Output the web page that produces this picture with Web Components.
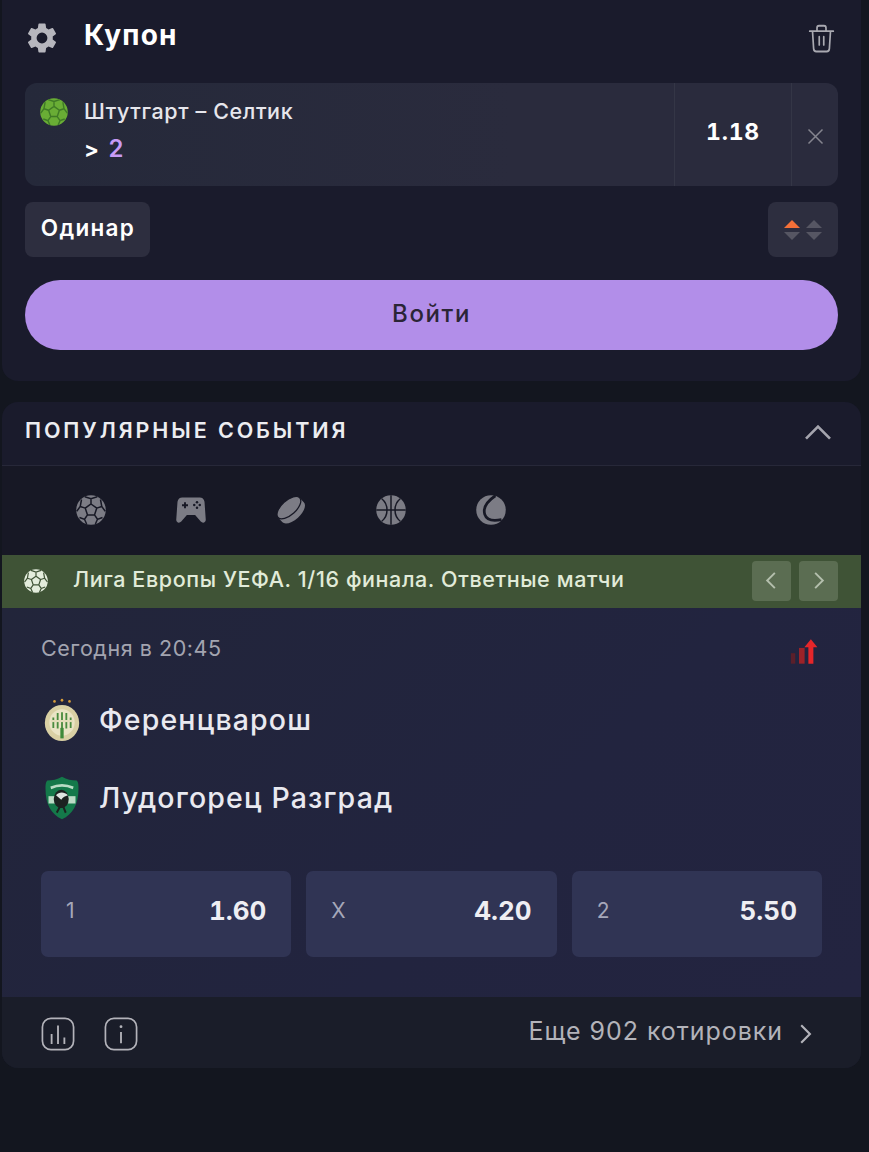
<!DOCTYPE html>
<html lang="ru">
<head>
<meta charset="utf-8">
<title>Купон</title>
<style>
    html, body { margin: 0; height: 100%; }
    body {
        background: #13161f;
        color: #fff;
        font-family: Inter, Roboto, "Noto Sans", sans-serif;
    }
    main {
        display: flex;
        flex-direction: column;
        gap: 21px;
        width: 859px;
        margin-left: 2px;
    }
</style>
</head>
<body>
<main>
    <coupon-panel></coupon-panel>
    <popular-panel></popular-panel>
</main>

<script>
const BALL_SEAMS = `
    <path d="M12 7.200l4.600 3.300-1.800 5.400H9.200l-1.800-5.400zM12 7.200V3M16.600 10.500l4-1.300M14.800 15.900l2.400 3.500M9.200 15.900l-2.400 3.500M7.400 10.500l-4-1.300M7 1.400l5 1.600 5-1.600M19.600 3.600l1 5.600 2.800 3.800M21.200 18l-4 1.400-1.700 3.800M8.500 23.200l-1.700-3.800-4-1.400M.6 13l2.800-3.800 1-5.600" stroke="var(--seam)" stroke-width="1.200" fill="none"/>`;

const ICONS = {
    gear: `<path fill="currentColor" d="M19.14 12.94c.04-.3.06-.61.06-.94 0-.32-.02-.64-.07-.94l2.03-1.58a.49.49 0 0 0 .12-.61l-1.92-3.32a.488.488 0 0 0-.59-.22l-2.39.96c-.5-.38-1.03-.7-1.62-.94l-.36-2.54a.484.484 0 0 0-.48-.41h-3.84c-.24 0-.43.17-.47.41l-.36 2.54c-.59.24-1.13.57-1.62.94l-2.39-.96c-.22-.08-.47 0-.59.22L2.74 8.87c-.12.21-.08.47.12.61l2.03 1.58c-.05.3-.09.63-.09.94s.02.64.07.94l-2.03 1.58a.49.49 0 0 0-.12.61l1.92 3.32c.12.22.37.29.59.22l2.39-.96c.5.38 1.03.7 1.62.94l.36 2.54c.05.24.24.41.48.41h3.84c.24 0 .44-.17.47-.41l.36-2.54c.59-.24 1.13-.56 1.62-.94l2.39.96c.22.08.47 0 .59-.22l1.92-3.32c.12-.22.07-.47-.12-.61l-2.01-1.58zM12 15.6A3.6 3.6 0 1 1 12 8.4a3.6 3.6 0 0 1 0 7.2z"/>`,
    trash: `<g fill="none" stroke="currentColor" stroke-width="1.500" stroke-linecap="round" stroke-linejoin="round"><path d="M1.500 6.500h21M8 6V4c0-1 .8-1.800 1.800-1.800h4.400c1 0 1.800.8 1.800 1.800v2M4 6.500l1 14c.1 1.300 1.100 2.300 2.400 2.300h9.200c1.300 0 2.300-1 2.400-2.300l1-14M10 11v6.500M14 11v6.500"/></g>`,
    close: `<path d="M4 4l16 16M20 4L4 20" stroke="currentColor" stroke-width="1.700" fill="none"/>`,
    up: `<path d="M3 17l9-9 9 9" stroke="currentColor" stroke-width="2" fill="none"/>`,
    left: `<path d="M15.500 4l-8 8 8 8" stroke="currentColor" stroke-width="2" fill="none"/>`,
    right: `<path d="M8.500 4l8 8-8 8" stroke="currentColor" stroke-width="2" fill="none"/>`,
    ball: `<circle cx="12" cy="12" r="11.800" fill="currentColor"/>${BALL_SEAMS}`,
    gamepad: `<path fill="currentColor" d="M5 2h14c2 0 3.400 1.200 3.800 3.400l1 14.200c.2 2.400-2.400 3.400-4 1.600l-4.500-5.200H8.700l-4.500 5.200c-1.600 1.800-4.200.8-4-1.600l1-14.200C1.600 3.200 3 2 5 2z"/><path d="M7.200 5.800v4.800M4.800 8.200h4.800" stroke="var(--seam)" stroke-width="1.500"/><g fill="var(--seam)"><circle cx="16.800" cy="5.800" r="1"/><circle cx="16.800" cy="10.200" r="1"/><circle cx="14.600" cy="8" r="1"/><circle cx="19" cy="8" r="1"/></g>`,
    puck: `<g transform="rotate(-42 12 12)"><path fill="currentColor" d="M.3 9.500v5c0 3.200 5.200 5.800 11.700 5.800s11.700-2.600 11.700-5.800v-5z"/><ellipse cx="12" cy="9.500" rx="11.700" ry="5.800" fill="currentColor" stroke="var(--seam)" stroke-width="1"/></g>`,
    basket: `<circle cx="12" cy="12" r="11.800" fill="currentColor"/><g fill="none" stroke="var(--seam)" stroke-width="1.200"><path d="M12 .2v23.600M.2 12h23.600M4.600 3c3 2.400 4.200 5.400 4.200 9s-1.200 6.600-4.200 9M19.400 3c-3 2.400-4.200 5.400-4.200 9s1.200 6.600 4.200 9"/></g>`,
    tennis: `<circle cx="12" cy="12" r="11.800" fill="currentColor"/><path d="M15.500 .6C9 5 5.500 10.500 7 15.500c1.400 4.400 6.500 5.600 13.400 4.200" fill="none" stroke="var(--seam)" stroke-width="2.200"/>`,
    trend: `<path d="M1.500 13h3.500v9H1.500z" fill="#5a1f2a"/><path d="M8 8.500h4.500V22H8z" fill="#9c2228"/><path d="M15.500 22V8h-3.200l5.200-7 5.200 7h-3.200v14z" fill="#e5262a"/>`,
    stats: `<rect x="1" y="1" width="22" height="22" rx="6" fill="none" stroke="currentColor" stroke-width="1.200"/><path d="M7.500 12v7M12 6v13M16.500 14.500V19" stroke="currentColor" stroke-width="1.300" fill="none"/>`,
    info: `<rect x="1" y="1" width="22" height="22" rx="6" fill="none" stroke="currentColor" stroke-width="1.200"/><path d="M12 10.500V18.500" stroke="currentColor" stroke-width="1.300" fill="none"/><circle cx="12" cy="6.800" r="1" fill="currentColor"/>`,
    ferencvaros: `<g fill="#d59b3a"><circle cx="7.500" cy="1.400" r=".8"/><circle cx="12" cy=".7" r=".8"/><circle cx="16.500" cy="1.400" r=".8"/></g><circle cx="12" cy="13.700" r="10.300" fill="#d9d0a4"/><circle cx="12" cy="13.400" r="7.600" fill="#eae4c5"/><g stroke="#4a8b3f" stroke-width="1.100"><path d="M6.800 10.500v6M9.400 8v8.800M12 7.500v9M14.600 8v8.800M17.200 10.500v6"/></g><path d="M5.500 12.600h13" stroke="#e3dcb8" stroke-width="1.200"/><path d="M12 16.500v6" stroke="#3f8a3a" stroke-width="2"/>`,
    ludogorets: `<path d="M12 .4c3.200 1.600 6.400 2 9.800 2.100 1.200 1 1.200 2.500 1.200 4.500 0 8.500-3.800 14-11 16.600C4.800 21 1 15.500 1 7c0-2 0-3.500 1.200-4.500C5.600 2.400 8.800 2 12 .4z" fill="#14794a"/><path d="M4.500 6.500c5-1.800 10-1.800 15 0" stroke="#b8dcc4" stroke-width="1.500" fill="none"/><path d="M3 11h18v4H3z" fill="#bcdcc6"/><circle cx="11.500" cy="12.500" r="5" fill="#1c2220"/><path d="M8 10.500c2-2 5.500-2 8 0-1.800.5-3.400.8-4.500 2.500z" fill="#dfe5e1"/><path d="M10.500 17l-2 3M13 17l1.500 3" stroke="#1c2220" stroke-width="1.300"/>`
};

class UiIcon extends HTMLElement {
    connectedCallback() {
        const size = this.getAttribute('size') || 24;
        const width = this.getAttribute('width') || size;
        this.attachShadow({ mode: 'open' }).innerHTML = `
            <style>
                :host { display: inline-flex; flex: none; }
                svg { display: block; overflow: visible; }
            </style>
            <svg width="${width}" height="${size}" viewBox="0 0 24 24"
                preserveAspectRatio="none">${ICONS[this.getAttribute('name')]}</svg>
        `;
    }
}

class CouponBet extends HTMLElement {
    constructor() {
        super();
        this.attachShadow({ mode: 'open' }).innerHTML = `
            <style>
                :host {
                    display: flex;
                    height: 103px;
                    background: linear-gradient(90deg, #25293a, #2a2b3d 60%);
                    border-radius: 12px;
                    overflow: hidden;
                }
                .info {
                    flex: 1;
                    display: grid;
                    grid-template-columns: 59px 1fr;
                    grid-template-rows: 38px 37px;
                    padding: 9px 0 0 0;
                    font-size: 21.500px;
                    font-weight: 500;
                    letter-spacing: .6px;
                    color: #e6e6ec;
                    align-items: center;
                }
                .sport { justify-self: end; margin-right: 16px; --seam: #3f7a26; color: #69ad35; margin-top: 2px; }
                .pick { display: flex; align-items: center; gap: 9px; grid-column: 2; font-size: 22px; font-weight: 700; color: #fff; }
                .pick b { color: #c79bf5; font-size: 24px; font-weight: 600; }
                .odd {
                    width: 118px;
                    display: flex;
                    align-items: center;
                    justify-content: center;
                    padding-bottom: 5px;
                    box-sizing: border-box;
                    font-size: 23px;
                    font-weight: 700;
                    letter-spacing: .8px;
                    font-variant-numeric: tabular-nums;
                    border-left: 1px solid #343646;
                    border-right: 1px solid #343646;
                }
                .remove {
                    width: 46px;
                    display: flex;
                    align-items: center;
                    justify-content: center;
                    padding-top: 4px;
                    box-sizing: border-box;
                    color: #85858f;
                }
            </style>
            <div class="info">
                <ui-icon class="sport" name="ball" size="28"></ui-icon>
                <span><slot name="title"></slot></span>
                <span class="pick"><span>&gt;</span><b><slot name="value"></slot></b></span>
            </div>
            <div class="odd"><slot name="odd"></slot></div>
            <div class="remove"><ui-icon name="close" size="21"></ui-icon></div>
        `;
    }
}

class CouponPanel extends HTMLElement {
    constructor() {
        super();
        this.attachShadow({ mode: 'open' }).innerHTML = `
            <style>
                :host {
                    display: block;
                    height: 381px;
                    box-sizing: border-box;
                    padding: 0 23px 0 23px;
                    background: #1a1b2c;
                    border-radius: 0 0 16px 16px;
                }
                header {
                    display: flex;
                    align-items: center;
                    height: 83px;
                    padding-bottom: 14px;
                    box-sizing: border-box;
                }
                .gear { color: #b6b6bd; margin-left: -1px; margin-top: 7px; }
                h1 {
                    flex: 1;
                    margin: 0 0 0 24px;
                    font-size: 28px;
                    font-weight: 700;
                    letter-spacing: 1.200px;
                    color: #fff;
                }
                .trash { color: #a9a9b1; margin-top: 7px; margin-right: 3px; }
                .options {
                    display: flex;
                    justify-content: space-between;
                    margin-top: 16px;
                    height: 55px;
                }
                .chip {
                    display: flex;
                    align-items: center;
                    justify-content: center;
                    background: #2d2e3f;
                    border-radius: 8px;
                    box-sizing: border-box;
                }
                .single { width: 125px; font-size: 22.500px; font-weight: 600; letter-spacing: 1.300px; padding: 0 0 4px 1px; }
                .sort { width: 70px; gap: 6px; }
                .arrows { display: flex; flex-direction: column; gap: 4px; }
                .tri { width: 0; height: 0; border-left: 8px solid transparent; border-right: 8px solid transparent; }
                .tri.u { border-bottom: 8px solid #565663; }
                .tri.d { border-top: 8px solid #565663; }
                .tri.on { border-bottom-color: #f47038; }
                .login {
                    display: flex;
                    align-items: center;
                    justify-content: center;
                    height: 70px;
                    margin-top: 23px;
                    padding-bottom: 4px;
                    box-sizing: border-box;
                    background: #b28ee9;
                    border-radius: 35px;
                    color: #2b2536;
                    font-size: 24px;
                    font-weight: 500;
                    letter-spacing: 1.600px;
                }
            </style>
            <header>
                <ui-icon class="gear" name="gear" size="36"></ui-icon>
                <h1>Купон</h1>
                <ui-icon class="trash" name="trash" size="30" width="27"></ui-icon>
            </header>
            <coupon-bet>
                <span slot="title">Штутгарт – Селтик</span>
                <span slot="value">2</span>
                <span slot="odd">1.18</span>
            </coupon-bet>
            <div class="options">
                <div class="chip single">Одинар</div>
                <div class="chip sort">
                    <div class="arrows"><i class="tri u on"></i><i class="tri d"></i></div>
                    <div class="arrows"><i class="tri u"></i><i class="tri d"></i></div>
                </div>
            </div>
            <div class="login">Войти</div>
        `;
    }
}

class SportTabs extends HTMLElement {
    constructor() {
        super();
        const names = ['ball', 'gamepad', 'puck', 'basket', 'tennis'];
        this.attachShadow({ mode: 'open' }).innerHTML = `
            <style>
                :host {
                    display: flex;
                    align-items: center;
                    gap: 70px;
                    height: 89px;
                    padding: 0 0 2px 74px;
                    box-sizing: border-box;
                    background: #171825;
                    --seam: #171825;
                    color: #7c7c85;
                }
            </style>
            ${names.map(name => `<ui-icon name="${name}" size="30"></ui-icon>`).join('')}
        `;
    }
}

class LeagueBar extends HTMLElement {
    constructor() {
        super();
        this.attachShadow({ mode: 'open' }).innerHTML = `
            <style>
                :host {
                    display: flex;
                    align-items: center;
                    height: 53px;
                    padding: 0 23px 2px 22px;
                    box-sizing: border-box;
                    background: #3f5336;
                    color: #e1ebd9;
                    font-size: 21.500px;
                    font-weight: 500;
                    letter-spacing: .6px;
                }
                .flag { color: #e3ecdc; --seam: #3f5336; margin-right: 25px; }
                .name { flex: 1; white-space: nowrap; margin-bottom: 3px; }
                button {
                    display: flex;
                    align-items: center;
                    justify-content: center;
                    width: 39px;
                    height: 40px;
                    padding: 0;
                    margin-left: 8px;
                    border: none;
                    border-radius: 4px;
                    background: #5b6d52;
                    color: #b4bfad;
                }
            </style>
            <ui-icon class="flag" name="ball" size="24"></ui-icon>
            <span class="name"><slot></slot></span>
            <button><ui-icon name="left" size="23"></ui-icon></button>
            <button><ui-icon name="right" size="23"></ui-icon></button>
        `;
    }
}

class TeamRow extends HTMLElement {
    constructor() {
        super();
        this.attachShadow({ mode: 'open' }).innerHTML = `
            <style>
                :host {
                    display: flex;
                    align-items: center;
                    gap: 16px;
                    height: 78px;
                    font-size: 28.500px;
                    font-weight: 500;
                    letter-spacing: 1.150px;
                    color: #e9e9f0;
                }
                .logo { display: flex; width: 42px; justify-content: center; }
                span { margin-bottom: 2px; }
            </style>
            <div class="logo"><slot name="logo"></slot></div>
            <span><slot></slot></span>
        `;
    }
}

class OddButton extends HTMLElement {
    constructor() {
        super();
        this.attachShadow({ mode: 'open' }).innerHTML = `
            <style>
                :host {
                    flex: 1;
                    display: flex;
                    align-items: center;
                    justify-content: space-between;
                    height: 86px;
                    padding: 0 25px 8px;
                    box-sizing: border-box;
                    background: #303454;
                    border-radius: 7px;
                }
                .label { font-size: 21px; color: #a5a7b9; }
                .value { font-size: 26px; font-weight: 700; color: #eeeef3; font-variant-numeric: tabular-nums; }
            </style>
            <span class="label">${this.getAttribute('label')}</span>
            <span class="value"><slot></slot></span>
        `;
    }
}

class MatchCard extends HTMLElement {
    constructor() {
        super();
        this.attachShadow({ mode: 'open' }).innerHTML = `
            <style>
                :host {
                    display: block;
                    height: 389px;
                    box-sizing: border-box;
                    padding: 0 39px;
                    background: linear-gradient(135deg, #22253a, #22243f 60%, #232440);
                }
                .top {
                    display: flex;
                    justify-content: space-between;
                    align-items: center;
                    height: 80px;
                    color: #a3a4b0;
                    font-size: 21.500px;
                    letter-spacing: .55px;
                }
                .trend { margin-right: 3px; margin-top: 7px; }
                .teams { display: block; margin-top: -7px; }
                .odds { display: flex; gap: 15px; margin-top: 34px; }
            </style>
            <div class="top">
                <span><slot name="time"></slot></span>
                <ui-icon class="trend" name="trend" size="28" width="30"></ui-icon>
            </div>
            <div class="teams"><slot name="teams"></slot></div>
            <div class="odds"><slot name="odds"></slot></div>
        `;
    }
}

class PopularPanel extends HTMLElement {
    constructor() {
        super();
        this.attachShadow({ mode: 'open' }).innerHTML = `
            <style>
                :host {
                    display: block;
                    background: #1a1b2c;
                    border-radius: 16px;
                    overflow: hidden;
                }
                header {
                    display: flex;
                    align-items: center;
                    justify-content: space-between;
                    height: 64px;
                    padding: 0 27px 7px 23px;
                    box-sizing: border-box;
                    border-bottom: 1px solid #272839;
                    font-size: 21.500px;
                    font-weight: 600;
                    letter-spacing: 2.900px;
                    color: #ecedf1;
                }
                header ui-icon { color: #a4a4ad; margin-top: 3px; }
                footer {
                    display: flex;
                    align-items: center;
                    height: 71px;
                    padding: 0 43px 0 39px;
                    box-sizing: border-box;
                    background: #1a1d29;
                    color: #b3b3ba;
                }
                footer .icons { display: flex; gap: 29px; flex: 1; margin-top: 3px; }
                .more { font-size: 25px; letter-spacing: .95px; margin-right: 9px; margin-bottom: 4px; }
                .go { margin-top: 2px; }
            </style>
            <header>
                <span>ПОПУЛЯРНЫЕ СОБЫТИЯ</span>
                <ui-icon name="up" size="32"></ui-icon>
            </header>
            <sport-tabs></sport-tabs>
            <league-bar>Лига Европы УЕФА. 1/16 финала. Ответные матчи</league-bar>
            <match-card>
                <span slot="time">Сегодня в 20:45</span>
                <div slot="teams">
                    <team-row><ui-icon slot="logo" name="ferencvaros" size="42" width="40"></ui-icon>Ференцварош</team-row>
                    <team-row><ui-icon slot="logo" name="ludogorets" size="44" width="36"></ui-icon>Лудогорец Разград</team-row>
                </div>
                <odd-button slot="odds" label="1">1.60</odd-button>
                <odd-button slot="odds" label="X">4.20</odd-button>
                <odd-button slot="odds" label="2">5.50</odd-button>
            </match-card>
            <footer>
                <div class="icons">
                    <ui-icon name="stats" size="34"></ui-icon>
                    <ui-icon name="info" size="34"></ui-icon>
                </div>
                <span class="more">Еще 902 котировки</span>
                <ui-icon class="go" name="right" size="26"></ui-icon>
            </footer>
        `;
    }
}

customElements.define('ui-icon', UiIcon);
customElements.define('coupon-bet', CouponBet);
customElements.define('coupon-panel', CouponPanel);
customElements.define('sport-tabs', SportTabs);
customElements.define('league-bar', LeagueBar);
customElements.define('team-row', TeamRow);
customElements.define('odd-button', OddButton);
customElements.define('match-card', MatchCard);
customElements.define('popular-panel', PopularPanel);
</script>
</body>
</html>
